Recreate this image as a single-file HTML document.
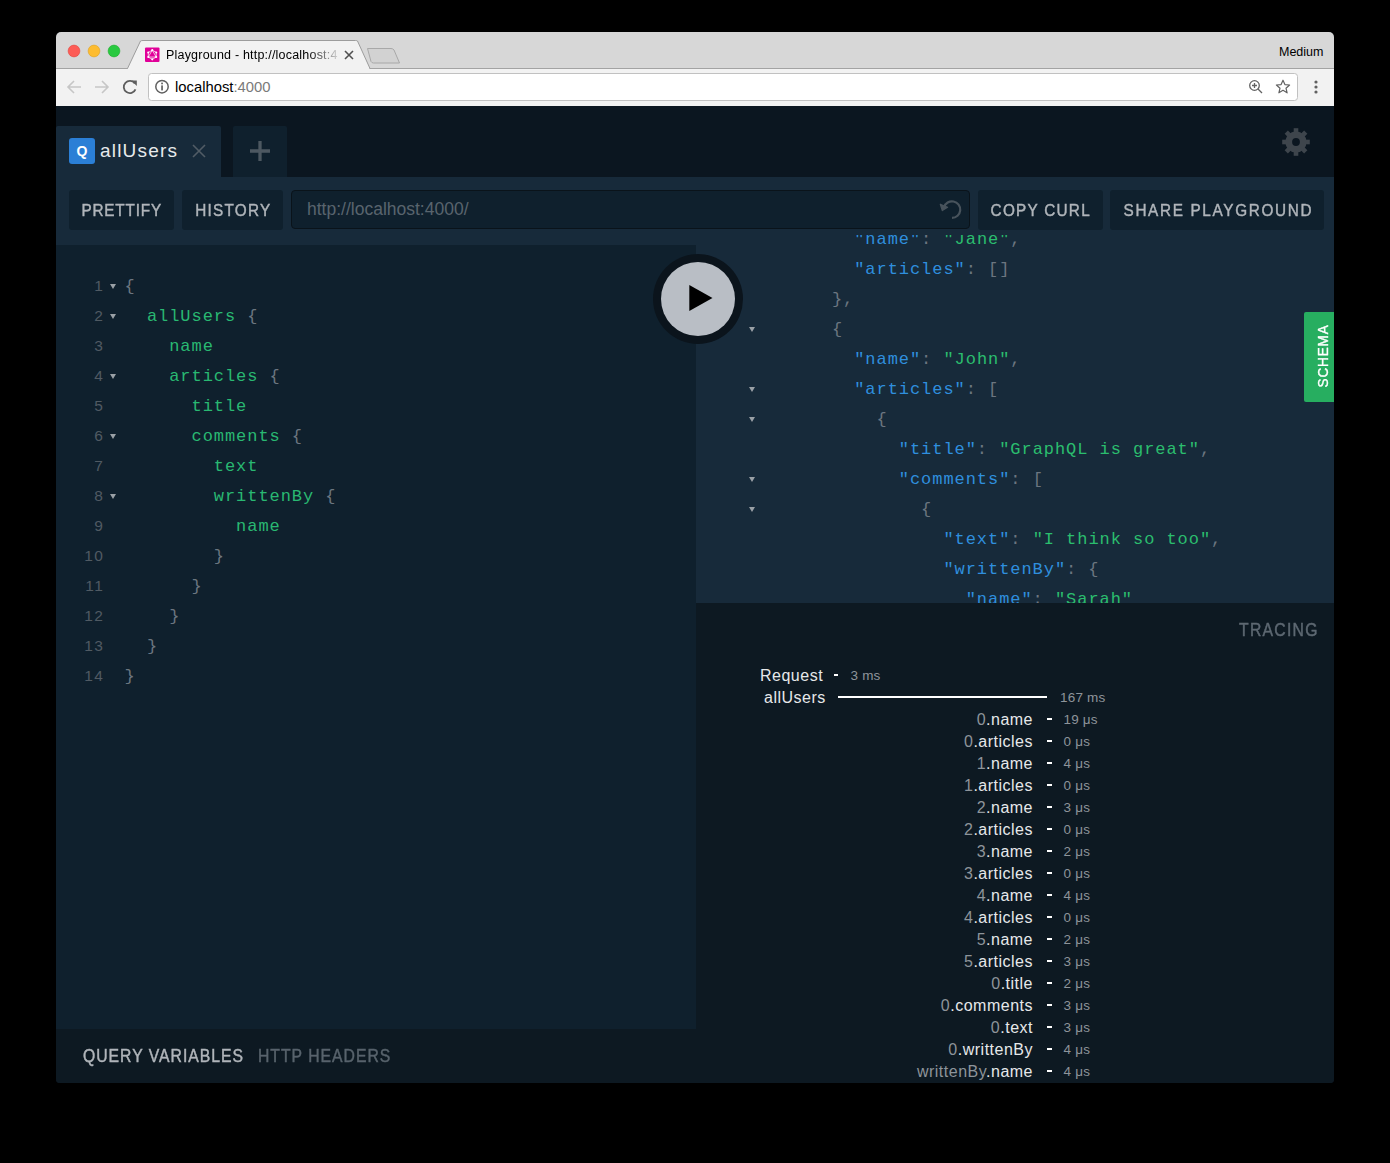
<!DOCTYPE html>
<html><head><meta charset="utf-8">
<style>
*{box-sizing:border-box;margin:0;padding:0}
html,body{width:1390px;height:1163px;background:#000;overflow:hidden;font-family:"Liberation Sans",sans-serif}
.a{position:absolute;white-space:pre}
#win{position:absolute;left:56px;top:32px;width:1278px;height:1051px;border-radius:5px 5px 4px 4px;overflow:hidden;background:#0d1821}
.mono{font-family:"Liberation Mono",monospace;font-size:17px;letter-spacing:0.95px;line-height:30px;height:30px}
.g{color:#29b872}
.p{color:#6c7680}
.k{color:#2f8fde}
.s{color:#2bbd6e}
.ln{color:#505a63;text-align:right;width:40px;font-family:"Liberation Sans",sans-serif;font-size:15.5px;letter-spacing:1.5px;transform:translateY(-1.1px)}
.fold{position:absolute;width:0;height:0;border-left:3px solid transparent;border-right:3px solid transparent;border-top:5px solid #9aa0a6}
.btn{position:absolute;background:#0f202d;border-radius:3px;color:#b0b5ba;font-size:17px;line-height:41px;height:40px;-webkit-text-stroke:0.45px #b0b5ba;text-align:center;white-space:pre}
.tr{position:absolute;white-space:pre;font-size:16px;letter-spacing:0.5px;line-height:24px;height:22px;color:#e6e8ea}
.tr .n{color:#8d949a}
.tt{position:absolute;white-space:pre;font-size:13.5px;letter-spacing:0.2px;line-height:24px;height:22px;color:#8d949a}
.dash{position:absolute;height:2.9px;background:#fff}
</style></head><body>
<div id="win">
  <!-- browser chrome -->
  <svg class="a" style="left:0;top:0" width="1278" height="74" viewBox="0 0 1278 74">
    <rect x="0" y="0" width="1278" height="37" fill="#d7d7d7"/>
    <rect x="0" y="36" width="1278" height="1" fill="#a3a3a3"/>
    <rect x="0" y="37" width="1278" height="37" fill="#f2f2f2"/>
    <path d="M71.5 36.5 L84.5 9 Q85.5 8.5 87 8.5 L299.5 8.5 Q301 8.5 301.5 9 L314 36.5" fill="#f2f2f2" stroke="#9c9c9c" stroke-width="1"/>
    <rect x="72" y="36" width="241" height="2" fill="#f2f2f2"/>
    <path d="M311.5 16.5 L335 16.5 Q337 16.5 338 18 L343.5 31 L317.5 31 Q316 31 315 29.5 Z" fill="#d2d2d2" stroke="#a8a8a8" stroke-width="1"/>
    <circle cx="18" cy="19" r="5.9" fill="#fd5c56" stroke="#e0443e" stroke-width="0.6"/>
    <circle cx="38" cy="19" r="5.9" fill="#fdbc30" stroke="#dea123" stroke-width="0.6"/>
    <circle cx="58" cy="19" r="5.9" fill="#29c940" stroke="#1dac2b" stroke-width="0.6"/>
    <!-- favicon -->
    <rect x="89" y="15.5" width="14.5" height="14.5" rx="1" fill="#e10098"/>
    <g fill="none" stroke="#fff" stroke-width="0.7"><path d="M96.25 18.15 L100.23 20.45 L100.23 25.05 L96.25 27.35 L92.27 25.05 L92.27 20.45 Z"/><path d="M96.25 18.15 L100.23 25.05 L92.27 25.05 Z"/></g><circle cx="96.25" cy="18.15" r="1.05" fill="#fff"/><circle cx="100.23" cy="20.45" r="1.05" fill="#fff"/><circle cx="100.23" cy="25.05" r="1.05" fill="#fff"/><circle cx="96.25" cy="27.35" r="1.05" fill="#fff"/><circle cx="92.27" cy="25.05" r="1.05" fill="#fff"/><circle cx="92.27" cy="20.45" r="1.05" fill="#fff"/>
    <!-- tab close -->
    <path d="M289.5 51.5 M289 19 L297 27 M297 19 L289 27" stroke="#505050" stroke-width="1.6"/>
    <!-- nav -->
    <g stroke="#c6c6c6" stroke-width="1.6" fill="none">
      <path d="M12 55 L25 55 M18 49 L12 55 L18 61"/>
      <path d="M39 55 L52 55 M46 49 L52 55 L46 61"/>
    </g>
    <g stroke="#5e5e5e" stroke-width="1.8" fill="none">
      <path d="M78.8 51.4 A6.1 6.1 0 1 0 79.5 57.3"/>
    </g>
    <path d="M75.3 48.6 L80.8 48.6 L80.8 54.1 Z" fill="#5e5e5e"/>
    <!-- omnibox -->
    <rect x="92.5" y="41.5" width="1149" height="27" rx="3" fill="#fff" stroke="#c1c1c1" stroke-width="1"/>
    <circle cx="106" cy="54.7" r="6.2" fill="none" stroke="#606060" stroke-width="1.5"/>
    <rect x="105.2" y="53.4" width="1.7" height="5" fill="#606060"/>
    <rect x="105.2" y="50.6" width="1.7" height="1.7" fill="#606060"/>
    <!-- zoom -->
    <circle cx="1198.5" cy="53.5" r="4.8" fill="none" stroke="#626262" stroke-width="1.3"/>
    <path d="M1198.5 51 L1198.5 56 M1196 53.5 L1201 53.5 M1202 57 L1206 61" stroke="#626262" stroke-width="1.3"/>
    <path d="M1227 48.2 L1228.9 52.6 L1233.6 53 L1230 56.2 L1231.1 60.8 L1227 58.3 L1222.9 60.8 L1224 56.2 L1220.4 53 L1225.1 52.6 Z" fill="none" stroke="#626262" stroke-width="1.2" stroke-linejoin="round"/>
    <circle cx="1260" cy="50" r="1.6" fill="#606060"/>
    <circle cx="1260" cy="55" r="1.6" fill="#606060"/>
    <circle cx="1260" cy="60" r="1.6" fill="#606060"/>
  </svg>
  <div class="a" style="left:110px;top:15px;font-size:12.5px;letter-spacing:0.2px;line-height:16px;color:#000;width:175px;-webkit-mask-image:linear-gradient(to right,#000 0,#000 142px,rgba(0,0,0,0.12) 172px)">Playground - http://localhost:4</div>
  <div class="a" style="left:1223px;top:12px;font-size:12.5px;line-height:16px;color:#000">Medium</div>
  <div class="a" style="left:119px;top:46px;font-size:14.8px;line-height:18px;color:#000">localhost<span style="color:#7a7a7a">:4000</span></div>

  <!-- page -->
  <div class="a" style="left:0;top:74px;width:1278px;height:977px;background:#0b1620"></div>
  <div class="a" style="left:0;top:94px;width:165px;height:51px;background:#172a3a;border-radius:2px 2px 0 0"></div>
  <div class="a" style="left:177px;top:94px;width:54px;height:51px;background:#0f202d;border-radius:2px 2px 0 0"></div>
  <div class="a" style="left:13px;top:106px;width:26px;height:26px;background:#2b7fd6;border-radius:3px;color:#fff;font-weight:bold;font-size:14px;line-height:27px;text-align:center">Q</div>
  <div class="a" style="left:44px;top:104px;font-size:19px;line-height:30px;color:#e8eaec;letter-spacing:1.2px">allUsers</div>
  <svg class="a" style="left:135.1px;top:110.7px" width="16" height="16"><path d="M2 2 L14 14 M14 2 L2 14" stroke="#515c65" stroke-width="1.6"/></svg>
  <svg class="a" style="left:192px;top:107.1px" width="24" height="24"><path d="M12 2 L12 22 M2 12 L22 12" stroke="#4d5861" stroke-width="3.3"/></svg>
  <svg class="a" style="left:1222px;top:92px" width="36" height="36" viewBox="-18 -18 36 36"><g fill="#3e454c"><rect x="-2.3" y="-13.8" width="4.6" height="27.6" transform="rotate(0)"/><rect x="-2.3" y="-13.8" width="4.6" height="27.6" transform="rotate(45)"/><rect x="-2.3" y="-13.8" width="4.6" height="27.6" transform="rotate(90)"/><rect x="-2.3" y="-13.8" width="4.6" height="27.6" transform="rotate(135)"/><circle r="10.6"/></g><circle r="3.9" fill="#0b1620"/></svg>

  <!-- toolbar row -->
  <div class="a" style="left:0;top:145px;width:1278px;height:68px;background:#172a3a"></div>
  <div class="btn" style="left:13px;top:158px;width:105px"><span style="display:inline-block;transform:scaleX(0.9);transform-origin:center;letter-spacing:0.9px;margin-right:-0.9px">PRETTIFY</span></div>
  <div class="btn" style="left:126px;top:158px;width:101px"><span style="display:inline-block;transform:scaleX(0.9);transform-origin:center;letter-spacing:1.4px;margin-right:-1.4px">HISTORY</span></div>
  <div class="a" style="left:235px;top:158px;width:679px;height:39px;background:#0f202d;border:1px solid #0a131a;border-radius:4px"></div>
  <div class="a" style="left:251px;top:158px;font-size:17.5px;line-height:39px;color:#59646d">http://localhost:4000/</div>
  <svg class="a" style="left:882px;top:164px" width="28" height="28" viewBox="0 0 28 28"><path d="M14 21.9 A8.3 8.3 0 1 0 6.0 11.2" fill="none" stroke="#48535c" stroke-width="2.2"/><path d="M2.3 8.2 L4.3 14.6 L9.6 11.2 Z" fill="#48535c" stroke="#48535c" stroke-width="1.2" stroke-linejoin="round"/></svg>
  <div class="btn" style="left:922px;top:158px;width:125px"><span style="display:inline-block;transform:scaleX(0.9);transform-origin:center;letter-spacing:1.4px;margin-right:-1.4px">COPY CURL</span></div>
  <div class="btn" style="left:1054px;top:158px;width:214px"><span style="display:inline-block;transform:scaleX(0.9);transform-origin:center;letter-spacing:1.85px;margin-right:-1.85px">SHARE PLAYGROUND</span></div>

  <!-- query editor -->
  <div class="a" style="left:0;top:213px;width:640px;height:784px;background:#0f202d"></div>
<div class="a mono ln" style="left:8.4px;top:240px">1</div>
<div class="fold" style="left:54px;top:251.5px"></div>
<div class="a mono" style="left:68.60px;top:240px"><span class="p">{</span></div>
<div class="a mono ln" style="left:8.4px;top:270px">2</div>
<div class="fold" style="left:54px;top:281.5px"></div>
<div class="a mono" style="left:90.90px;top:270px"><span class="g">allUsers</span><span class="p"> {</span></div>
<div class="a mono ln" style="left:8.4px;top:300px">3</div>
<div class="a mono" style="left:113.20px;top:300px"><span class="g">name</span></div>
<div class="a mono ln" style="left:8.4px;top:330px">4</div>
<div class="fold" style="left:54px;top:341.5px"></div>
<div class="a mono" style="left:113.20px;top:330px"><span class="g">articles</span><span class="p"> {</span></div>
<div class="a mono ln" style="left:8.4px;top:360px">5</div>
<div class="a mono" style="left:135.50px;top:360px"><span class="g">title</span></div>
<div class="a mono ln" style="left:8.4px;top:390px">6</div>
<div class="fold" style="left:54px;top:401.5px"></div>
<div class="a mono" style="left:135.50px;top:390px"><span class="g">comments</span><span class="p"> {</span></div>
<div class="a mono ln" style="left:8.4px;top:420px">7</div>
<div class="a mono" style="left:157.80px;top:420px"><span class="g">text</span></div>
<div class="a mono ln" style="left:8.4px;top:450px">8</div>
<div class="fold" style="left:54px;top:461.5px"></div>
<div class="a mono" style="left:157.80px;top:450px"><span class="g">writtenBy</span><span class="p"> {</span></div>
<div class="a mono ln" style="left:8.4px;top:480px">9</div>
<div class="a mono" style="left:180.10px;top:480px"><span class="g">name</span></div>
<div class="a mono ln" style="left:8.4px;top:510px">10</div>
<div class="a mono" style="left:157.80px;top:510px"><span class="p">}</span></div>
<div class="a mono ln" style="left:8.4px;top:540px">11</div>
<div class="a mono" style="left:135.50px;top:540px"><span class="p">}</span></div>
<div class="a mono ln" style="left:8.4px;top:570px">12</div>
<div class="a mono" style="left:113.20px;top:570px"><span class="p">}</span></div>
<div class="a mono ln" style="left:8.4px;top:600px">13</div>
<div class="a mono" style="left:90.90px;top:600px"><span class="p">}</span></div>
<div class="a mono ln" style="left:8.4px;top:630px">14</div>
<div class="a mono" style="left:68.60px;top:630px"><span class="p">}</span></div>
  <!-- results -->
  <div class="a" style="left:640px;top:203px;width:638px;height:368px;background:#172a3a;overflow:hidden" id="res">
<div class="a mono" style="left:158.20px;top:-10px"><span class="k">"name"</span><span class="p">: </span><span class="s">"Jane"</span><span class="p">,</span></div>
<div class="a mono" style="left:158.20px;top:20px"><span class="k">"articles"</span><span class="p">: []</span></div>
<div class="a mono" style="left:135.90px;top:50px"><span class="p">},</span></div>
<div class="fold" style="left:53px;top:92px"></div>
<div class="a mono" style="left:135.90px;top:80px"><span class="p">{</span></div>
<div class="a mono" style="left:158.20px;top:110px"><span class="k">"name"</span><span class="p">: </span><span class="s">"John"</span><span class="p">,</span></div>
<div class="fold" style="left:53px;top:152px"></div>
<div class="a mono" style="left:158.20px;top:140px"><span class="k">"articles"</span><span class="p">: [</span></div>
<div class="fold" style="left:53px;top:182px"></div>
<div class="a mono" style="left:180.50px;top:170px"><span class="p">{</span></div>
<div class="a mono" style="left:202.80px;top:200px"><span class="k">"title"</span><span class="p">: </span><span class="s">"GraphQL is great"</span><span class="p">,</span></div>
<div class="fold" style="left:53px;top:242px"></div>
<div class="a mono" style="left:202.80px;top:230px"><span class="k">"comments"</span><span class="p">: [</span></div>
<div class="fold" style="left:53px;top:272px"></div>
<div class="a mono" style="left:225.10px;top:260px"><span class="p">{</span></div>
<div class="a mono" style="left:247.40px;top:290px"><span class="k">"text"</span><span class="p">: </span><span class="s">"I think so too"</span><span class="p">,</span></div>
<div class="a mono" style="left:247.40px;top:320px"><span class="k">"writtenBy"</span><span class="p">: {</span></div>
<div class="a mono" style="left:269.70px;top:350px"><span class="k">"name"</span><span class="p">: </span><span class="s">"Sarah"</span></div>
  </div>
  <!-- tracing -->
  <div class="a" style="left:640px;top:571px;width:638px;height:480px;background:#0d1922">
  <div class="a" style="left:543px;top:16px;font-size:17.5px;line-height:22px;color:#5d6872;-webkit-text-stroke:0.45px #5d6872"><span style="display:inline-block;transform:scaleX(0.9);transform-origin:left;letter-spacing:1.4px;margin-right:-1.4px">TRACING</span></div>
<div class="a tr" style="left:64px;top:61px">Request</div>
<div class="dash" style="left:138px;top:70.5px;width:4px"></div>
<div class="a tt" style="left:154.5px;top:61px">3 ms</div>
<div class="a tr" style="left:68px;top:83px">allUsers</div>
<div class="dash" style="left:142px;top:92.5px;width:209px;height:2.6px"></div>
<div class="a tt" style="left:364px;top:83px">167 ms</div>
<div class="a tr" style="right:301px;top:105px"><span class="n">0</span>.name</div>
<div class="dash" style="left:351px;top:114.5px;width:4.5px"></div>
<div class="a tt" style="left:367.5px;top:105px">19 μs</div>
<div class="a tr" style="right:301px;top:127px"><span class="n">0</span>.articles</div>
<div class="dash" style="left:351px;top:136.5px;width:4.5px"></div>
<div class="a tt" style="left:367.5px;top:127px">0 μs</div>
<div class="a tr" style="right:301px;top:149px"><span class="n">1</span>.name</div>
<div class="dash" style="left:351px;top:158.5px;width:4.5px"></div>
<div class="a tt" style="left:367.5px;top:149px">4 μs</div>
<div class="a tr" style="right:301px;top:171px"><span class="n">1</span>.articles</div>
<div class="dash" style="left:351px;top:180.5px;width:4.5px"></div>
<div class="a tt" style="left:367.5px;top:171px">0 μs</div>
<div class="a tr" style="right:301px;top:193px"><span class="n">2</span>.name</div>
<div class="dash" style="left:351px;top:202.5px;width:4.5px"></div>
<div class="a tt" style="left:367.5px;top:193px">3 μs</div>
<div class="a tr" style="right:301px;top:215px"><span class="n">2</span>.articles</div>
<div class="dash" style="left:351px;top:224.5px;width:4.5px"></div>
<div class="a tt" style="left:367.5px;top:215px">0 μs</div>
<div class="a tr" style="right:301px;top:237px"><span class="n">3</span>.name</div>
<div class="dash" style="left:351px;top:246.5px;width:4.5px"></div>
<div class="a tt" style="left:367.5px;top:237px">2 μs</div>
<div class="a tr" style="right:301px;top:259px"><span class="n">3</span>.articles</div>
<div class="dash" style="left:351px;top:268.5px;width:4.5px"></div>
<div class="a tt" style="left:367.5px;top:259px">0 μs</div>
<div class="a tr" style="right:301px;top:281px"><span class="n">4</span>.name</div>
<div class="dash" style="left:351px;top:290.5px;width:4.5px"></div>
<div class="a tt" style="left:367.5px;top:281px">4 μs</div>
<div class="a tr" style="right:301px;top:303px"><span class="n">4</span>.articles</div>
<div class="dash" style="left:351px;top:312.5px;width:4.5px"></div>
<div class="a tt" style="left:367.5px;top:303px">0 μs</div>
<div class="a tr" style="right:301px;top:325px"><span class="n">5</span>.name</div>
<div class="dash" style="left:351px;top:334.5px;width:4.5px"></div>
<div class="a tt" style="left:367.5px;top:325px">2 μs</div>
<div class="a tr" style="right:301px;top:347px"><span class="n">5</span>.articles</div>
<div class="dash" style="left:351px;top:356.5px;width:4.5px"></div>
<div class="a tt" style="left:367.5px;top:347px">3 μs</div>
<div class="a tr" style="right:301px;top:369px"><span class="n">0</span>.title</div>
<div class="dash" style="left:351px;top:378.5px;width:4.5px"></div>
<div class="a tt" style="left:367.5px;top:369px">2 μs</div>
<div class="a tr" style="right:301px;top:391px"><span class="n">0</span>.comments</div>
<div class="dash" style="left:351px;top:400.5px;width:4.5px"></div>
<div class="a tt" style="left:367.5px;top:391px">3 μs</div>
<div class="a tr" style="right:301px;top:413px"><span class="n">0</span>.text</div>
<div class="dash" style="left:351px;top:422.5px;width:4.5px"></div>
<div class="a tt" style="left:367.5px;top:413px">3 μs</div>
<div class="a tr" style="right:301px;top:435px"><span class="n">0</span>.writtenBy</div>
<div class="dash" style="left:351px;top:444.5px;width:4.5px"></div>
<div class="a tt" style="left:367.5px;top:435px">4 μs</div>
<div class="a tr" style="right:301px;top:457px"><span class="n">writtenBy</span>.name</div>
<div class="dash" style="left:351px;top:466.5px;width:4.5px"></div>
<div class="a tt" style="left:367.5px;top:457px">4 μs</div>
  </div>
  <!-- bottom bar -->
  <div class="a" style="left:0;top:997px;width:640px;height:54px;background:#0d1922">
    <div class="a" style="left:27px;top:16px;font-size:17.5px;line-height:22px;color:#b0b5ba;-webkit-text-stroke:0.45px #b0b5ba"><span style="display:inline-block;transform:scaleX(0.9);transform-origin:left;letter-spacing:1.1px;margin-right:-1.1px">QUERY VARIABLES</span></div>
    <div class="a" style="left:202px;top:16px;font-size:17.5px;line-height:22px;color:#58636c;-webkit-text-stroke:0.45px #58636c"><span style="display:inline-block;transform:scaleX(0.9);transform-origin:left;letter-spacing:1.1px;margin-right:-1.1px">HTTP HEADERS</span></div>
  </div>
  <!-- schema tab -->
  <div class="a" style="left:1248px;top:280px;width:30px;height:90px;background:#27ae60;border-radius:2px 0 0 2px"></div>
  <div class="a" style="left:1233px;top:314px;width:68px;height:22px;font-size:15px;line-height:22px;color:#fff;-webkit-text-stroke:0.35px #fff;text-align:center;transform:rotate(-90deg)"><span style="display:inline-block;transform:scaleX(0.9);transform-origin:center;letter-spacing:1.0px;margin-right:-1.0px">SCHEMA</span></div>
  <!-- play button -->
  <div class="a" style="left:597px;top:222px;width:90px;height:90px;border-radius:50%;background:#0b141c"></div>
  <div class="a" style="left:605px;top:230px;width:74px;height:74px;border-radius:50%;background:#b9bec5"></div>
  <svg class="a" style="left:632px;top:252px" width="26" height="28"><path d="M1.3 1 L24.5 14 L1.3 27 Z" fill="#000"/></svg>
</div>
</body></html>
